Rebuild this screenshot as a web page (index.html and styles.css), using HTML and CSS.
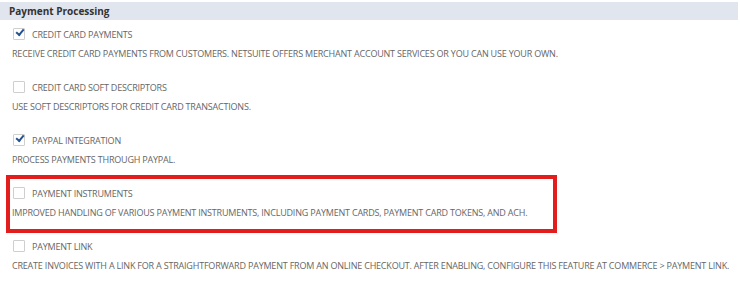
FILE: index.html
```html
<!DOCTYPE html>
<html lang="en">
<head>
    <meta charset="UTF-8">
    <title>Payment Processing</title>
    <link rel="stylesheet" href="styles.css">
</head>
<body>

<div class="section">
    <div class="section-header">Payment Processing</div>

    <div class="feature">
        <label class="feature-label">
            <span class="checkbox checked"></span>
            CREDIT CARD PAYMENTS
        </label>
        <p class="feature-desc">Receive credit card payments from customers. NetSuite offers merchant account services or you can use your own.</p>
    </div>

    <div class="feature">
        <label class="feature-label">
            <span class="checkbox"></span>
            CREDIT CARD SOFT DESCRIPTORS
        </label>
        <p class="feature-desc">Use soft descriptors for credit card transactions.</p>
    </div>

    <div class="feature">
        <label class="feature-label">
            <span class="checkbox checked"></span>
            PAYPAL INTEGRATION
        </label>
        <p class="feature-desc">Process payments through PayPal.</p>
    </div>

    <div class="feature highlighted">
        <label class="feature-label">
            <span class="checkbox"></span>
            PAYMENT INSTRUMENTS
        </label>
        <p class="feature-desc">Improved handling of various payment instruments, including payment cards, payment card tokens, and ACH.</p>
    </div>

    <div class="feature">
        <label class="feature-label">
            <span class="checkbox"></span>
            PAYMENT LINK
        </label>
        <p class="feature-desc">Create invoices with a link for a straightforward payment from an online checkout. After enabling, configure this feature at Commerce &gt; Payment Link.</p>
    </div>
</div>

</body>
</html>
```

FILE: styles.css
```css
:root {
    --header-bg: #e0e5ee;
    --text-color: #666;
    --header-text: #333;
    --check-color: #24528f;
    --box-border: #cfcfcf;
    --highlight: #e31c1c;
}

body {
    margin: 0;
    background: #fff;
    font-family: "Open Sans", Arial, sans-serif;
    color: var(--text-color);
}

.section {
    padding-top: 2px;
}

.section-header {
    height: 18px;
    line-height: 18px;
    margin-right: 2px;
    padding-left: 9px;
    background-color: var(--header-bg);
    color: var(--header-text);
    font-size: 10px;
    font-weight: 700;
}

.feature {
    margin: 0 0 3px 10px;
    padding: 7px 0 9px 2px;
    height: 50px;
    box-sizing: border-box;
}

.feature.highlighted {
    width: 543px;
    outline: 4px solid var(--highlight);
}

.feature-label {
    display: flex;
    align-items: center;
    gap: 7px;
    height: 14px;
    padding-left: 1px;
    font-size: 9px;
    letter-spacing: -0.2px;
}

.checkbox {
    position: relative;
    width: 12px;
    height: 12px;
    box-sizing: border-box;
    border: 1px solid var(--box-border);
    border-radius: 1px;
    background: #fff;
}

.checkbox.checked::after {
    content: "";
    position: absolute;
    left: 2px;
    top: 0px;
    width: 6px;
    height: 3px;
    border-left: 2px solid var(--check-color);
    border-bottom: 2px solid var(--check-color);
    transform: rotate(-50deg);
}

.feature-desc {
    margin: 6px 0 0;
    line-height: 14px;
    font-size: 9px;
    letter-spacing: -0.2px;
    text-transform: uppercase;
    white-space: nowrap;
}
```
